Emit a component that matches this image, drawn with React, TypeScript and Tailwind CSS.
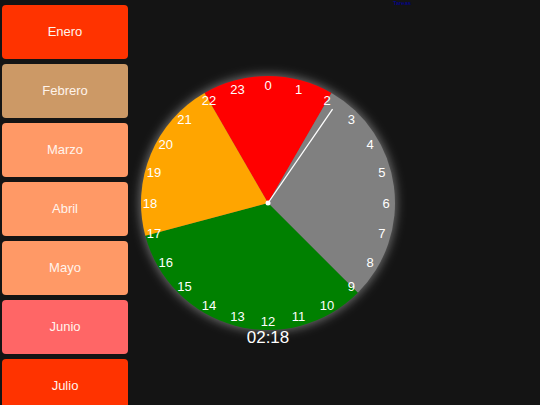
import React from "react";

const months = [
  { name: "Enero", color: "bg-[#ff3300]" },
  { name: "Febrero", color: "bg-[#cc9966]" },
  { name: "Marzo", color: "bg-[#ff9966]" },
  { name: "Abril", color: "bg-[#ff9966]" },
  { name: "Mayo", color: "bg-[#ff9966]" },
  { name: "Junio", color: "bg-[#ff6666]" },
  { name: "Julio", color: "bg-[#ff3300]" },
];

const segments = [
  { from: 22, to: 26, fill: "#ff0000" },
  { from: 2, to: 9, fill: "#808080" },
  { from: 9, to: 17, fill: "#008000" },
  { from: 17, to: 22, fill: "#ffa500" },
];

const CX = 140;
const CY = 140;
const R = 127;

function pt(hour: number, r: number) {
  const a = (hour * 15 * Math.PI) / 180;
  return [CX + r * Math.sin(a), CY - r * Math.cos(a)];
}

function wedge(from: number, to: number) {
  const [x1, y1] = pt(from, R);
  const [x2, y2] = pt(to, R);
  const large = (to - from) * 15 > 180 ? 1 : 0;
  return `M${CX} ${CY} L${x1} ${y1} A${R} ${R} 0 ${large} 1 ${x2} ${y2} Z`;
}

function Clock() {
  const [hx, hy] = pt(2 + 18 / 60, 114);
  return (
    <svg width="280" height="290" viewBox="0 0 280 290" className="block">
      <defs>
        <filter id="glow" x="-20%" y="-20%" width="140%" height="140%">
          <feGaussianBlur stdDeviation="5" />
        </filter>
      </defs>
      <circle cx={CX} cy={CY} r={R + 2} fill="rgba(255,255,255,0.35)" filter="url(#glow)" />
      {segments.map((s) => (
        <path key={s.from} d={wedge(s.from, s.to)} fill={s.fill} />
      ))}
      {Array.from({ length: 24 }).map((_, h) => {
        const [x, y] = pt(h, 118);
        return (
          <text
            key={h}
            x={x}
            y={y}
            textAnchor="middle"
            dominantBaseline="central"
            fill="#ffffff"
            fontSize="13"
            fontFamily="'Liberation Sans', Arial, sans-serif"
          >
            {h}
          </text>
        );
      })}
      <line x1={CX} y1={CY} x2={hx} y2={hy} stroke="#ffffff" strokeWidth="1.3" />
      <circle cx={CX} cy={CY} r="2.5" fill="#ffffff" />
      <text
        x={CX}
        y={274}
        textAnchor="middle"
        dominantBaseline="central"
        fill="#ffffff"
        fontSize="17"
        fontFamily="'Liberation Sans', Arial, sans-serif"
      >
        02:18
      </text>
    </svg>
  );
}

export default function App() {
  return (
    <div className="w-[540px] h-[405px] overflow-hidden bg-[#141414] flex font-['Liberation_Sans',Arial,sans-serif]">
      {/* Month list */}
      <div className="flex flex-col gap-[5px] pt-[5px] pl-[2px] w-[128px] shrink-0">
        {months.map((m) => (
          <button
            key={m.name}
            className={`${m.color} h-[54px] w-[126px] shrink-0 rounded-[4px] text-[13px] text-[#fff4ec]`}
          >
            {m.name}
          </button>
        ))}
      </div>

      {/* Clock area */}
      <div className="flex-1 flex flex-col">
        <div className="h-[63px] pl-[265px]">
          <a className="block text-[6px] leading-[7px] text-[#0000a0]">Tareas</a>
        </div>
        <Clock />
      </div>
    </div>
  );
}
